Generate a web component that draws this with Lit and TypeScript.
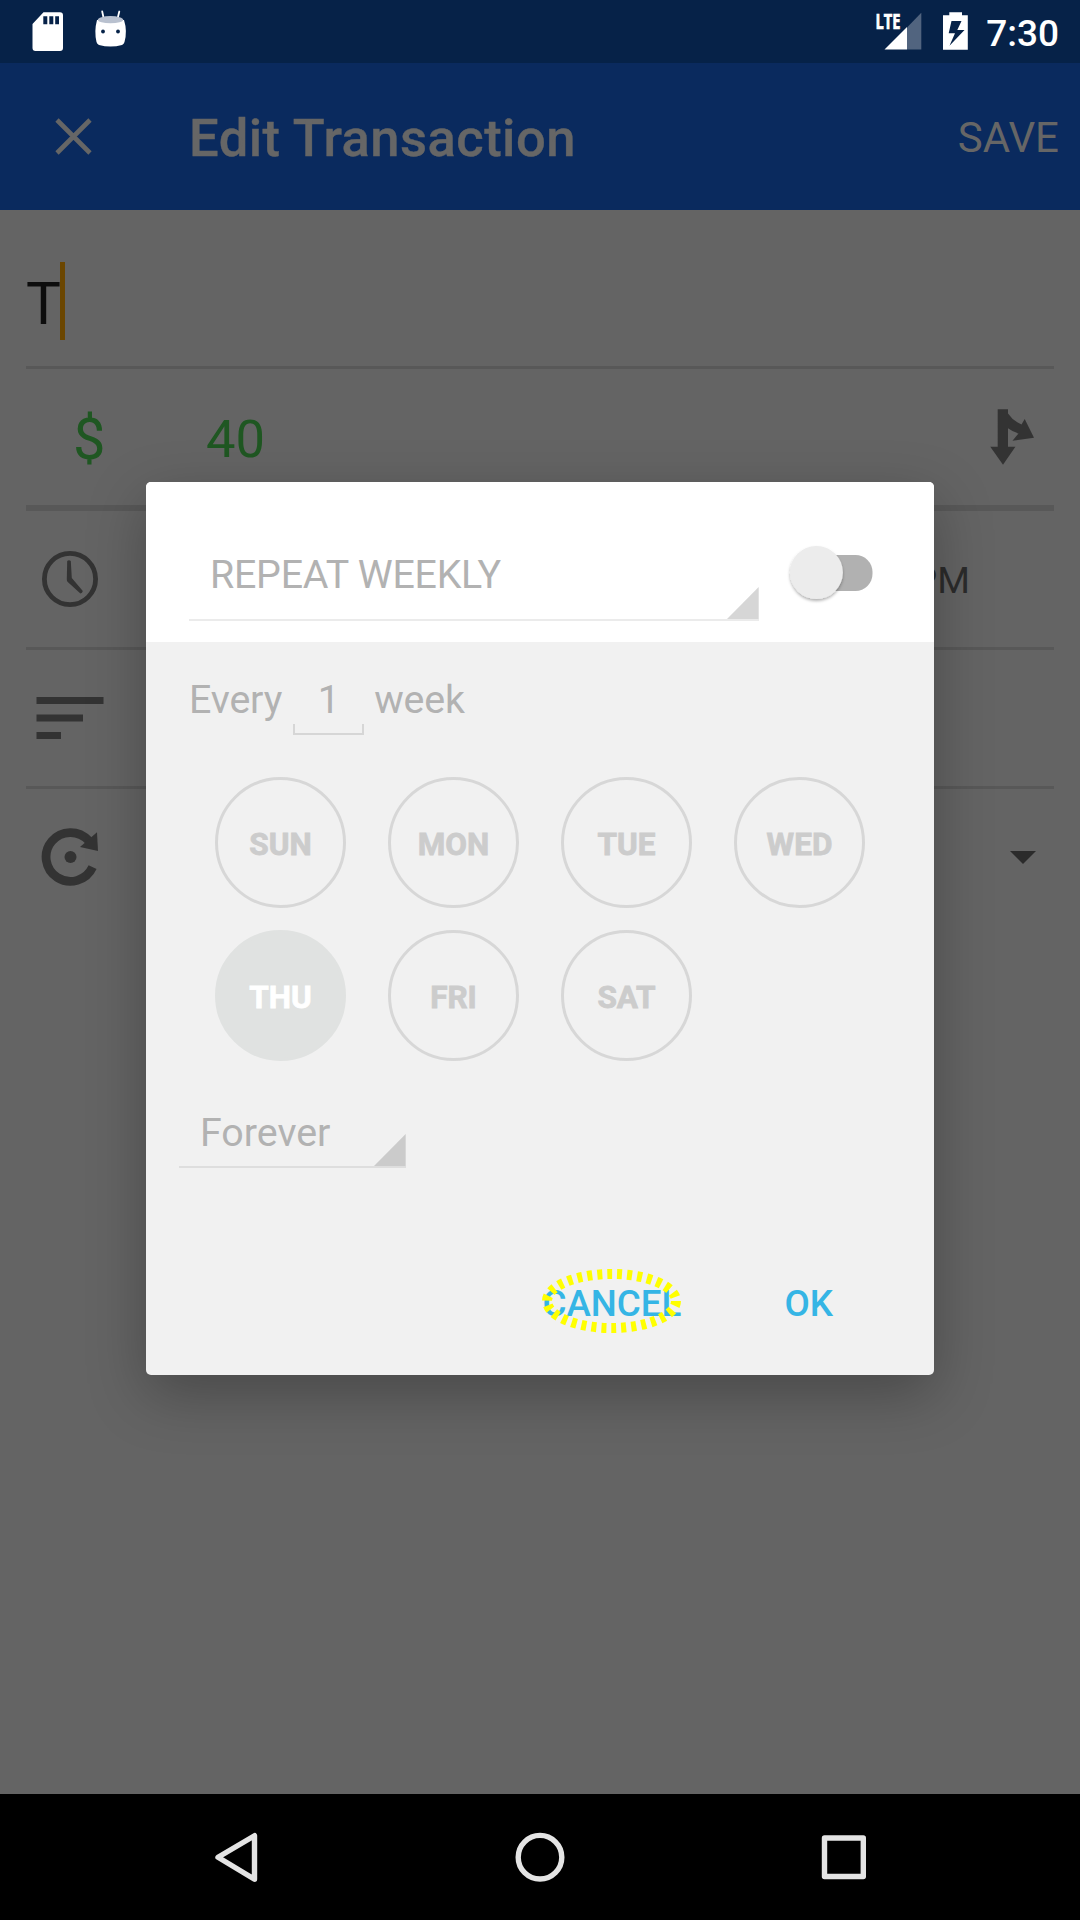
import { LitElement, html, css, svg } from "lit";
import { customElement, property } from "lit/decorators.js";
import { classMap } from "lit/directives/class-map.js";

@customElement("status-bar")
class StatusBar extends LitElement {
  static styles = css`
    :host {
      display: flex;
      justify-content: space-between;
      height: 63px;
      background: #062248;
      color: #fff;
      font-size: 37px;
      font-weight: 500;
    }
    .group { display: flex; height: 63px; }
    .clock { line-height: 63px; padding: 2px 21px 0 1px; height: 63px; box-sizing: border-box; }
    svg { display: block; }
    .lte { font: 700 21px "Open Sans", sans-serif; stroke: #fff; stroke-width: 0.7px; }
  `;
  render() {
    return html`
      <div class="group">
        <svg width="140" height="63" viewBox="0 0 140 63">
          <path fill="#fff" fill-rule="evenodd" d="M43.5 12.300H60q3 0 3 3V48q0 3-3 3H35.500q-3 0-3-3V24zM43.300 16.300v8h4v-8zM49.300 16.300v8h4v-8zM55.200 16.300v8h3.800v-8z"/>
          <path d="M102.200 11.500l1.500 7M119.300 11.500l-1.700 7" stroke="#fff" stroke-width="1.800" stroke-linecap="round"/>
          <path fill="#fff" d="M97 20Q94 31 96.500 42Q97 44 99 45Q110.500 48 122 45Q124 44 124.500 42Q127.500 31 124 20z"/>
          <ellipse cx="110.500" cy="19.700" rx="12.700" ry="3.600" fill="#b9c1cf"/>
          <circle cx="103" cy="31.500" r="1.900" fill="#062248"/><circle cx="118" cy="31.500" r="1.900" fill="#062248"/>
        </svg>
      </div>
      <div class="group">
        <svg width="112" height="63" viewBox="873 0 112 63">
          <path fill="#51647f" d="M907 27.500L921.300 12.800V49.500H907z"/>
          <path fill="#fff" d="M884.500 49.500L907 27v22.500z"/>
          <text class="lte" x="875.500" y="28.700" fill="#fff" textLength="25" lengthAdjust="spacingAndGlyphs">LTE</text>
          <path fill="#fff" fill-rule="evenodd" d="M949.300 12.300H962v3H967.800V49.800H943V15.300h6.300zM951.500 21L948.700 33.200H955L949.500 45.700L964.500 30H957.300L961.500 21z"/>
        </svg>
        <div class="clock">7:30</div>
      </div>
    `;
  }
}

@customElement("app-bar")
class AppBar extends LitElement {
  static styles = css`
    :host {
      display: flex;
      align-items: center;
      height: 147px;
      box-sizing: border-box;
      padding: 0 21px 0 55px;
      background: #0a2a5e;
      color: #666;
    }
    .title { flex: 1; margin-left: 97px; padding-top: 3px; font-size: 52.5px; font-weight: 500; letter-spacing: 0.47px; -webkit-text-stroke: 0.4px currentColor; }
    .save { padding-top: 2px; font-size: 42px; }
  `;
  render() {
    return html`
      <svg width="37" height="37" viewBox="0 0 37 37" fill="none" stroke="#666" stroke-width="4.600">
        <path d="M2 2l33 33M35 2L2 35"/>
      </svg>
      <div class="title">Edit Transaction</div>
      <div class="save">SAVE</div>
    `;
  }
}

@customElement("transaction-form")
class TransactionForm extends LitElement {
  static styles = css`
    :host { display: flex; flex-direction: column; flex: 1; padding: 0 26px; background: #646464; color: #0d0d0d; }
    .row { display: flex; align-items: center; height: 136px; border-bottom: 3px solid #585858; }
    .row.name { height: 156px; font-size: 58.500px; }
    .row.amount { border-bottom-width: 6px; color: #1f5722; font-size: 52.5px; }
    .row.repeat { border-bottom: none; }
    .entry { padding: 32px 0 0 0; }
    .caret { width: 5px; height: 78px; margin: 26px 0 0 -1px; background: #6b4600; }
    .currency { width: 180px; box-sizing: border-box; padding: 3px 0 0 47px; font-size: 57.75px; }
    .value { flex: 1; padding-top: 3px; }
    .split { margin-right: 19px; }
    .lead { margin-left: 10px; }
    .time { margin-left: auto; padding: 1px 84px 0 0; font-size: 37.500px; color: #2b2b2b; }
    .arrow { margin: 1px 18px 0 auto; }
    svg { display: block; }
  `;
  render() {
    return html`
      <div class="row name"><span class="entry">T</span><i class="caret"></i></div>
      <div class="row amount">
        <span class="currency">$</span>
        <span class="value">40</span>
        <svg class="split" width="45" height="56" viewBox="990 409 45 56" fill="#333">
          <path d="M997.700 409.300H1008V413.500Q1013 421 1021.500 424.500L1024.700 419L1034 437.700L1012.500 440.700L1018.500 433.500Q1013 432 1008 428.300V446.700H1015.400L1003 464.700L990.300 446.700H997.700z"/>
        </svg>
      </div>
      <div class="row">
        <svg class="lead" width="68" height="58" viewBox="36 550 68 58">
          <circle cx="70" cy="579" r="25.600" fill="none" stroke="#333" stroke-width="4.800"/>
          <path fill="#333" d="M67.200 561q1.800-1.400 3.600 0L71.800 578L82.800 591q-.4 2.200-2.400 2.500L67.500 581.800Q66.800 581 66.800 579.500z"/>
        </svg>
        <span class="time">PM</span>
      </div>
      <div class="row">
        <svg class="lead" width="68" height="42" viewBox="0 0 68 42" fill="#333">
          <path d="M.500 0H67.500V7H.500zM.500 17.500H47V24.500H.500zM.500 35H25V42H.500z"/>
        </svg>
      </div>
      <div class="row repeat">
        <svg class="lead" width="68" height="58" viewBox="36 828 68 58">
          <path d="M92.600 867.200A24.400 24.400 0 1 1 88.500 840.500" fill="none" stroke="#333" stroke-width="8.800"/>
          <circle cx="70.500" cy="857" r="6" fill="#333"/>
          <path d="M97 832.300L98 851L80 847z" fill="#333"/>
        </svg>
        <svg class="arrow" width="26" height="13" viewBox="0 0 26 13"><path d="M0 0H26L13 13z" fill="#2b2b2b"/></svg>
      </div>
    `;
  }
}

@customElement("drop-select")
class DropSelect extends LitElement {
  @property() label = "";
  static styles = css`
    :host { display: flex; justify-content: space-between; align-items: flex-end; box-sizing: border-box; border-bottom: 2px solid var(--rule); color: #b2b2b2; }
    .label { padding: 0 0 var(--lift) 21px; font-size: 39.375px; line-height: 46px; letter-spacing: var(--tracking, 0); }
    svg { display: block; fill: var(--corner); }
  `;
  render() {
    return html`
      <span class="label">${this.label}</span>
      <svg width="32" height="32" viewBox="0 0 32 32"><path d="M31.700 0V32H0z"/></svg>
    `;
  }
}

@customElement("repeat-dialog")
class RepeatDialog extends LitElement {
  private days = ["SUN", "MON", "TUE", "WED", "THU", "FRI", "SAT"];
  static styles = css`
    :host {
      display: flex;
      flex-direction: column;
      width: 788px;
      height: 893px;
      border-radius: 5px;
      overflow: hidden;
      background: #f1f1f1;
      color: #b2b2b2;
      font-size: 39.375px;
      box-shadow: 0 19px 58px rgba(0, 0, 0, 0.28);
    }
    .head { display: flex; height: 160px; background: #fff; }
    .freq { width: 570px; height: 139px; margin-left: 43px; --rule: #ebebeb; --corner: #d6d6d6; --lift: 21px; --tracking: -0.25px; }
    .switch { margin: 60px 0 0 26.500px; }
    .every { display: flex; align-items: flex-start; padding: 35px 0 0 43px; height: 135px; box-sizing: border-box; line-height: 46px; letter-spacing: -0.15px; }
    .count { display: flex; flex-direction: column; align-items: center; width: 71px; margin: 0 10px 0 11px; }
    .bracket { width: 71px; height: 11px; margin-top: 1px; box-sizing: border-box; border: 2px solid #d6d6d6; border-top: none; }
    .days { display: grid; grid-template-columns: repeat(4, 131px); gap: 22px 42px; padding-left: 69px; }
    .day {
      display: flex; align-items: center; justify-content: center;
      width: 131px; height: 131px; box-sizing: border-box;
      border: 3px solid #d7d7d7; border-radius: 50%;
      font-size: 31.500px; font-weight: 700; color: #ccc; padding-top: 3px;
      -webkit-text-stroke: 0.8px currentColor;
    }
    .day.on { background: #e0e2e1; border-color: #e0e2e1; color: #fff; }
    .until { width: 227px; height: 107px; margin-left: 33px; --rule: #dedede; --corner: #cbcbcb; --lift: 10px; }
    .actions { display: flex; justify-content: flex-end; margin-top: 113px; padding-right: 101px; gap: 103px; color: #35b5e5; font-size: 36.75px; font-weight: 500; line-height: 46px; }
    .cancel { position: relative; }
    .ring { position: absolute; left: -2px; top: -14px; }
    svg { display: block; }
  `;
  render() {
    return html`
      <div class="head">
        <drop-select class="freq" label="REPEAT WEEKLY"></drop-select>
        <svg class="switch" width="90" height="66" viewBox="785 542 90 66">
          <defs>
            <filter id="lift" x="-30%" y="-30%" width="160%" height="160%"><feDropShadow dx="0" dy="2" stdDeviation="1.800" flood-color="#000" flood-opacity=".3"/></filter>
          </defs>
          <rect x="800" y="555" width="71.500" height="36" rx="17" fill="#b1b1b1"/>
          <circle cx="815.400" cy="572.400" r="26.500" fill="#ececec" filter="url(#lift)"/>
        </svg>
      </div>
      <div class="every">
        <span>Every</span>
        <div class="count"><span>1</span><i class="bracket"></i></div>
        <span>week</span>
      </div>
      <div class="days">
        ${this.days.map((d) => html`<div class=${classMap({ day: true, on: d === "THU" })}>${d}</div>`)}
      </div>
      <drop-select class="until" label="Forever"></drop-select>
      <div class="actions">
        <div class="cancel">CANCEL
          <svg class="ring" width="144" height="68" viewBox="540 1267 144 68">
            <ellipse cx="611.500" cy="1301" rx="64.500" ry="27" fill="none" stroke="#ff0" stroke-width="10" stroke-dasharray="5 5"/>
          </svg>
        </div>
        <div>OK</div>
      </div>
    `;
  }
}

@customElement("nav-bar")
class NavBar extends LitElement {
  static styles = css`
    :host { display: flex; align-items: center; height: 126px; padding: 0 213px 0 214px; justify-content: space-between; background: #000; }
    svg { display: block; fill: none; stroke: #e4e4e4; stroke-width: 5.400; stroke-linejoin: round; }
  `;
  render() {
    const icons = [
      { w: 44, s: svg`<path d="M40.500 3.700V47.200L4 25.300z"/>` },
      { w: 52, s: svg`<circle cx="26" cy="25.200" r="21.800"/>` },
      { w: 46, s: svg`<rect x="3.500" y="6" width="38.800" height="38.500"/>` },
    ];
    return icons.map((i) => html`<svg width=${i.w} height="51" viewBox="0 0 ${i.w} 51">${i.s}</svg>`);
  }
}

@customElement("app-root")
class AppRoot extends LitElement {
  static styles = css`
    :host {
      display: flex;
      flex-direction: column;
      position: relative;
      width: 1080px;
      height: 1920px;
      overflow: hidden;
      font-family: Roboto, "Liberation Sans", sans-serif;
    }
    .dialog { position: absolute; left: 146px; top: 482px; }
  `;
  render() {
    return html`
      <status-bar></status-bar>
      <app-bar></app-bar>
      <transaction-form></transaction-form>
      <nav-bar></nav-bar>
      <repeat-dialog class="dialog"></repeat-dialog>
    `;
  }
}
